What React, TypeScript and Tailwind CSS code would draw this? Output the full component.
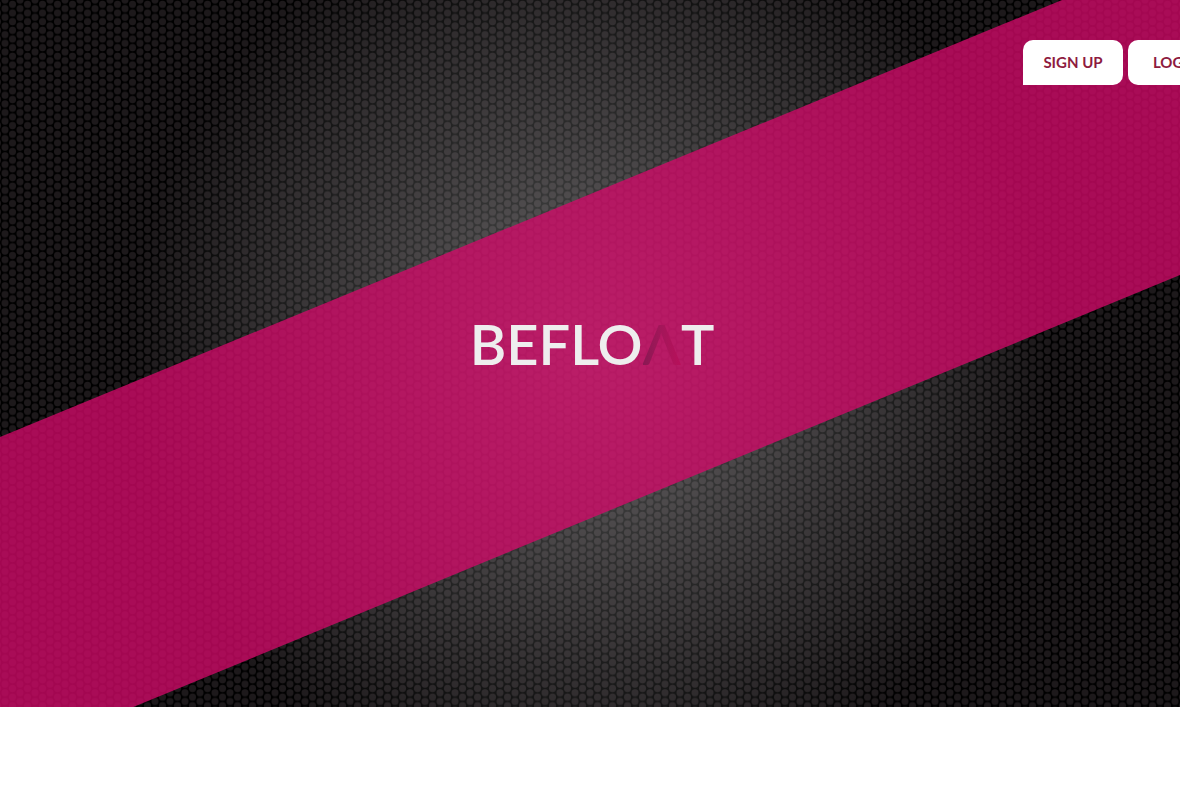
function Backdrop() {
    return (
        <div className="absolute inset-0" aria-hidden="true">
            <svg className="block w-full h-full">
                <defs>
                    <pattern
                        id="mesh"
                        x="5"
                        y="0"
                        width="15"
                        height="8.66"
                        patternUnits="userSpaceOnUse"
                    >
                        <rect width="15" height="8.66" fill="#000000" />
                        <g fill="#1d191b">
                            <circle cx="0" cy="0" r="3.5" />
                            <circle cx="15" cy="0" r="3.5" />
                            <circle cx="0" cy="8.66" r="3.5" />
                            <circle cx="15" cy="8.66" r="3.5" />
                            <circle cx="7.5" cy="4.33" r="3.5" />
                        </g>
                    </pattern>
                    <radialGradient
                        id="glow"
                        gradientUnits="userSpaceOnUse"
                        cx="50%"
                        cy="50%"
                        r="460"
                    >
                        <stop offset="0" stopColor="#ffffff" stopOpacity="0.33" />
                        <stop offset="0.4" stopColor="#ffffff" stopOpacity="0.2" />
                        <stop offset="0.75" stopColor="#ffffff" stopOpacity="0.09" />
                        <stop offset="1" stopColor="#ffffff" stopOpacity="0" />
                    </radialGradient>
                </defs>
                <rect width="100%" height="100%" fill="url(#mesh)" />
                <rect width="100%" height="100%" fill="url(#glow)" />
            </svg>

            {/* Diagonal band */}
            <div className="absolute inset-0 bg-[#d4096a]/77 [clip-path:polygon(0_61.8%,90%_0,100%_0,100%_38.9%,11.3%_100%,0_100%)]" />
        </div>
    );
}

export default function App() {
    return (
        <div className="min-h-screen bg-white font-['Lato',sans-serif]">
            <section className="relative flex flex-col h-[calc(100vh-80px)] overflow-hidden bg-black">
                <Backdrop />

                {/* Account buttons, the second one runs off the right edge */}
                <header className="relative flex justify-end pt-10">
                    <nav className="flex gap-[5px] w-[157px]">
                        <button
                            type="button"
                            className="shrink-0 w-[100px] h-[45px] rounded-[10px] rounded-bl-none bg-white text-[15px] font-bold text-[#8e1b40]"
                        >
                            SIGN UP
                        </button>
                        <button
                            type="button"
                            className="shrink-0 w-[100px] h-[45px] rounded-[10px] bg-white text-[15px] font-bold text-[#8e1b40]"
                        >
                            LOG IN
                        </button>
                    </nav>
                </header>

                {/* Logo */}
                <main className="relative flex flex-1 items-center justify-center pl-1 pb-26">
                    <h1 className="text-[56px] leading-none font-semibold text-[#eeeeee]">
                        BEFLO
                        <span className="bg-linear-to-r from-[#8a1853] via-[#a5165a] to-[#b80f5a] bg-clip-text text-transparent">
                            Λ
                        </span>
                        T
                    </h1>
                </main>
            </section>
        </div>
    );
}
